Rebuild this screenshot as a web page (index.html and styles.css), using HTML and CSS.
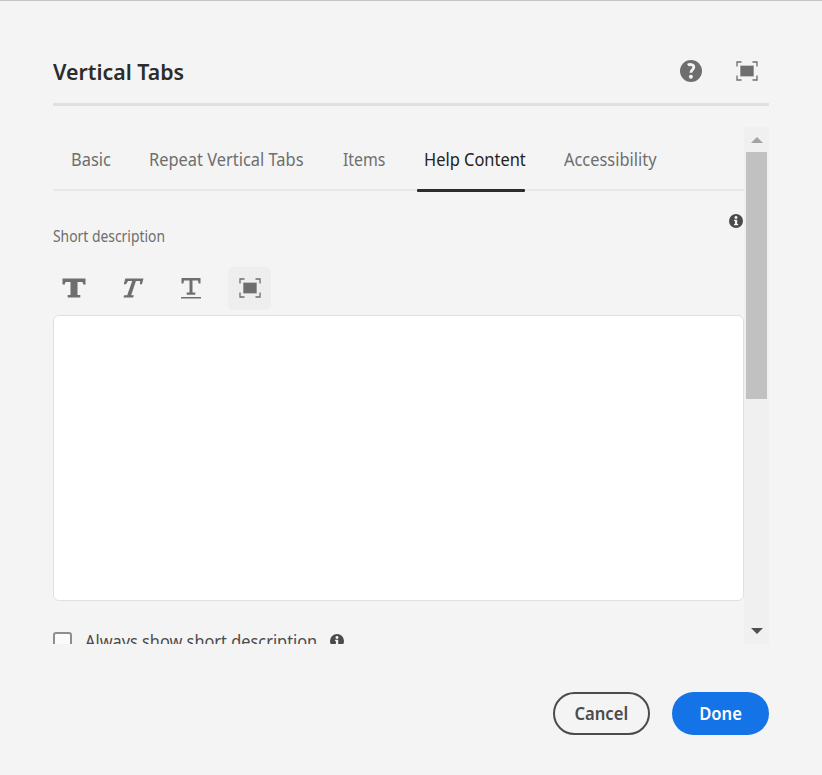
FILE: index.html
```html
<!DOCTYPE html>
<html lang="en">
<head>
<meta charset="utf-8">
<title>Vertical Tabs</title>
<link rel="stylesheet" href="styles.css">
</head>
<body>
<svg width="0" height="0" class="defs">
  <symbol id="full" viewBox="0 0 22 20">
    <path d="M1 5.500V1H5.500M16.500 1h4.500v4.500M21 14.500v4.500h-4.500M5.500 19H1v-4.500" fill="none" stroke="currentColor" stroke-width="1.3"/>
    <path d="M4 4h14v12H4z" fill="currentColor" opacity=".35"/><path d="M4.500 5h13v10h-13z" fill="currentColor"/>
  </symbol>
  <symbol id="info" viewBox="0 0 14 14">
    <circle cx="7" cy="7" r="7" fill="currentColor"/>
    <circle cx="7" cy="3.500" r="1.450" fill="#f4f4f4"/>
    <path d="M5 5.800h3.200v4.100H9.200V11.200H5V9.900h.9V7H5z" fill="#f4f4f4"/>
  </symbol>
</svg>
<main class="dialog">
  <header class="header">
    <h1><span class="t">Vertical Tabs</span></h1>
    <div class="actions">
      <svg class="help" viewBox="0 0 22 22"><circle cx="11" cy="11" r="11" fill="currentColor"/><path d="M7.800 5.200c1.300-.9 6-1.400 6 2 0 2.500-2.900 2.500-2.900 5.500" fill="none" stroke="#f4f4f4" stroke-width="2.800"/><circle cx="10.900" cy="16.700" r="2" fill="#f4f4f4"/></svg>
      <svg class="full"><use href="#full"/></svg>
    </div>
  </header>
  <section class="viewport">
    <div class="content">
      <nav class="tabs">
        <a class="tab basic"><span class="t">Basic</span></a>
        <a class="tab repeat"><span class="t">Repeat Vertical Tabs</span></a>
        <a class="tab items"><span class="t">Items</span></a>
        <a class="tab helpc active"><span class="t">Help Content</span></a>
        <a class="tab access"><span class="t">Accessibility</span></a>
      </nav>
      <div class="hint"><svg class="info"><use href="#info"/></svg></div>
      <div class="label"><span class="t">Short description</span></div>
      <div class="toolbar">
        <button><svg width="24" height="20" viewBox="0 0 24 20"><path d="M.5.500h23v6h-2.200L20.500 4H15.500v13H18.300v2.500H5.700V17h2.800V4h-5L2.700 6.500H.5z" fill="currentColor"/></svg></button>
        <button><svg width="22" height="20" viewBox="0 0 22 20"><path d="M3.300.500H21.500l-1.600 5.700h-2L18.100 3h-4.200L9.200 17.200h2.700l-.7 2.300H1.500l.7-2.300h3L10.200 3H6L4 6.200H1.800z" fill="currentColor"/></svg></button>
        <button><svg width="20" height="22" viewBox="0 0 20 22"><path d="M.5 1h19v5.500h-1.900L17 3.500h-5.500v12h2.800V17.700H5.700v-2.200h2.800v-12H3l-.6 3H.5zM0 20h20v1.500H0z" fill="currentColor"/></svg></button>
        <button class="filled"><svg class="full"><use href="#full"/></svg></button>
      </div>
      <div class="editor" contenteditable="true"></div>
      <div class="check"><span class="box"></span><span class="checktext"><span class="t">Always show short description</span></span><svg class="info"><use href="#info"/></svg></div>
    </div>
    <div class="scrollbar"><i class="up"></i><i class="thumb"></i><i class="down"></i></div>
  </section>
  <footer class="footer">
    <button class="cancel"><span class="t">Cancel</span></button>
    <button class="done"><span class="t">Done</span></button>
  </footer>
</main>
</body>
</html>
```
FILE: styles.css
```css
* { box-sizing: border-box; }
body { margin: 0; background: #f4f4f4; font-family: "Noto Sans", sans-serif; color: #6e6e6e; overflow: hidden; }
.defs { display: block; height: 0; }
button { font: inherit; padding: 0; border: 0; background: none; color: inherit; }
svg { display: block; flex: none; }
.t { display: inline-block; white-space: nowrap; transform-origin: 0 50%; }
.dialog { width: 822px; height: 775px; padding: 0 53px; border-top: 1px solid #c4c4c4; display: flex; flex-direction: column; }
.header { height: 105px; flex: none; border-bottom: 3px solid #e0e0e0; display: flex; justify-content: space-between; padding-top: 51px; }
h1 { margin: 0; font-size: 22px; font-weight: 600; line-height: 38px; color: #2c2c2c; width: 132px; }
h1 .t { transform: scaleX(.97); }
.actions { display: flex; gap: 34px; padding: 8px 11px 0 0; height: 30px; }
.help { width: 22px; height: 22px; }
.full { width: 22px; height: 20px; }
.actions .full { margin-top: 1px; }
.viewport { height: 517px; margin-top: 21px; flex: none; display: flex; overflow: hidden; }
.content { width: 691px; height: 517px; overflow: hidden; }
.tabs { height: 64px; border-bottom: 2px solid #e8e8e8; display: flex; gap: 39px; padding-left: 17.5px; font-size: 18px; line-height: 64px; }
.tab { position: relative; height: 65px; flex: none; }
.tab .t { transform: scaleX(.912); }
.basic { width: 39px; }
.repeat { width: 155px; }
.items { width: 42px; }
.tab.items .t { transform: scaleX(.88); }
.helpc { width: 101px; }
.access { width: 94px; }
.active { color: #222; }
.active::after { content: ""; position: absolute; left: -6.5px; right: -.5px; bottom: 0; height: 3px; border-radius: 1px; background: #2c2c2c; }
.hint { display: flex; justify-content: flex-end; margin-top: 23px; height: 14px; padding-right: 1px; }
.info { width: 14px; height: 14px; color: #4b4b4b; }
.label { font-size: 15.5px; line-height: 20px; height: 20px; margin-top: -2px; }
.label .t { transform: scaleX(.895); }
.toolbar { height: 43px; margin-top: 21px; display: flex; gap: 16px; }
.toolbar button { width: 42px; height: 43px; display: grid; place-items: center; border-radius: 5px; padding-bottom: 1px; }
.toolbar button:nth-child(1) { padding-right: 1px; }
.toolbar button:nth-child(2) { margin-left: 1px; }
.toolbar .filled { width: 43px; }
.filled { background: #eeeeee; }
.editor { height: 286px; margin-top: 5px; background: #fff; border: 1px solid #e0e0e0; border-radius: 6px; }
.check { display: flex; align-items: flex-start; margin-top: 31px; color: #4b4b4b; }
.box { width: 19px; height: 19px; border: 2px solid #8e8e8e; border-radius: 3px; background: #fafafa; }
.checktext { width: 232px; margin-left: 13px; font-size: 18px; line-height: 19px; }
.checktext .t { transform: scaleX(.907); }
.check .info { margin: 2px 0 0 13px; }
.scrollbar { width: 25px; height: 517px; background: #f0f0f0; display: flex; flex-direction: column; align-items: center; }
.up, .down { border: 6px solid transparent; width: 0; }
.up { border-top: 0; border-bottom-color: #a3a3a3; margin-top: 10px; }
.thumb { width: 21px; height: 247px; margin-top: 9px; background: #c1c1c1; }
.down { border-bottom: 0; border-top-color: #505050; margin-top: 229px; }
.footer { display: flex; justify-content: flex-end; gap: 22px; margin-top: 48px; }
.footer button { width: 97px; height: 43px; border-radius: 22px; font-size: 17.5px; font-weight: 600; padding-bottom: 2px; }
.footer .t { transform: scaleX(.95); transform-origin: 50% 50%; }
.footer .cancel { border: 2px solid #4b4b4b; color: #4b4b4b; }
.footer .done { background: #1473e6; color: #fff; }
```
